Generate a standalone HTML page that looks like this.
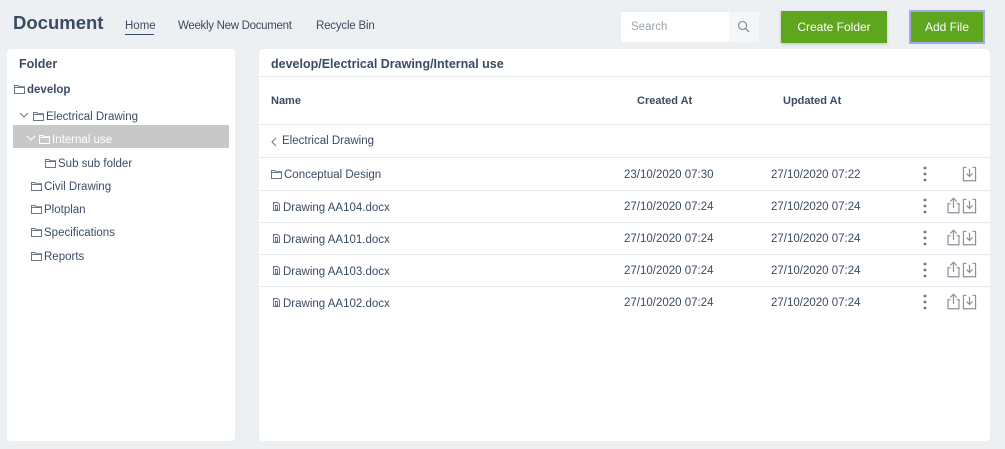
<!DOCTYPE html>
<html><head><meta charset="utf-8"><style>
*{margin:0;padding:0;box-sizing:border-box}
body{width:1005px;height:449px;background:#edf0f2;font-family:"Liberation Sans",sans-serif;color:#3a4b63;position:relative;overflow:hidden;font-size:11.5px}
.a{position:absolute;white-space:nowrap}
.t{margin-top:1px}
.panel{position:absolute;background:#fff;border-radius:4px}
.line{position:absolute;height:1px;background:#e6e9ec}
.f{display:inline-block;vertical-align:-1px;margin-right:2px}
.b{font-weight:bold}
.btn{position:absolute;background:#5ea61e;color:#fff;font-size:12px;text-align:center;line-height:30px}
</style></head><body>
<svg width="0" height="0" style="position:absolute"><defs>
<symbol id="fo" viewBox="0 0 11 10"><path d="M0.5 1.5h3.5l1 1.3h5.5v6.7h-10z M0.5 3.5h10" fill="none" stroke="#6b7686" stroke-width="1"/></symbol>
<symbol id="fi" viewBox="0 0 9 11"><path d="M1.5 1.5h4l2 2v6h-6z M3.5 4.5h2v4h-2z" fill="none" stroke="#6b7686" stroke-width="1"/></symbol>
<symbol id="up" viewBox="0 0 14 14"><path d="M4.5 5.5h-2v7.5h9v-7.5h-2 M7 9V1 M4.3 3.7L7 1L9.7 3.7" fill="none" stroke="#8a929c" stroke-width="1"/></symbol>
<symbol id="dn" viewBox="0 0 14 14"><path d="M4.5 2h-2.5v11h10v-11h-2.5 M7 3v6.5 M4.5 7L7 9.5L9.5 7" fill="none" stroke="#8a929c" stroke-width="1"/></symbol>
</defs></svg>

<div class="a b" style="left:13px;top:12px;font-size:18.5px;color:#3a4b63">Document</div>
<div class="a" style="left:125px;top:20px">Home</div>
<div class="a" style="left:125px;top:34px;width:29px;height:1px;background:#3a4b63"></div>
<div class="a" style="left:178px;top:20px;letter-spacing:-0.3px">Weekly New Document</div>
<div class="a" style="left:316px;top:20px;letter-spacing:-0.2px">Recycle Bin</div>

<div class="a" style="left:621px;top:12px;width:108px;height:30px;background:#fff"></div>
<div class="a" style="left:631px;top:21px;color:#9aa3ae">Search</div>
<div class="a" style="left:729px;top:12px;width:30px;height:30px;background:#f4f6f8"></div>
<svg class="a" style="left:737px;top:20px" width="14" height="14" viewBox="0 0 14 14"><circle cx="5.5" cy="5.5" r="4" fill="none" stroke="#7a8390" stroke-width="1.1"/><path d="M8.5 8.5L12 12" stroke="#7a8390" stroke-width="1.2"/></svg>
<div class="btn" style="left:781px;top:11px;width:106px;height:32px;line-height:32px;box-shadow:0 1px 3px rgba(0,0,0,.2)">Create Folder</div>
<div class="btn" style="left:909px;top:10px;width:76px;height:34px;line-height:30px;border:2px solid #a3a8e6">Add File</div>

<div class="panel" style="left:7px;top:49px;width:228px;height:392px"></div>
<div class="a b" style="left:19px;top:57px;font-size:12.5px">Folder</div>
<div class="a b t" style="left:14px;top:83px"><svg class="f" width="11" height="10"><use href="#fo"/></svg>develop</div>
<svg class="a" style="left:19px;top:112px" width="10" height="7"><path d="M1 1l4 4l4-4" fill="none" stroke="#6b7686"/></svg>
<div class="a t" style="left:33px;top:110px"><svg class="f" width="11" height="10"><use href="#fo"/></svg>Electrical Drawing</div>
<div class="a" style="left:13px;top:125px;width:216px;height:23px;background:#c8c8c8"></div>
<svg class="a" style="left:26px;top:135px" width="10" height="7"><path d="M1 1l4 4l4-4" fill="none" stroke="#fff"/></svg>
<div class="a t" style="left:39px;top:133px;color:#fff"><svg class="f" width="11" height="10"><path d="M0.5 1.5h3.5l1 1.3h5.5v6.7h-10z M0.5 3.5h10" fill="none" stroke="#fff"/></svg>Internal use</div>
<div class="a t" style="left:45px;top:157px"><svg class="f" width="11" height="10"><use href="#fo"/></svg>Sub sub folder</div>
<div class="a t" style="left:31px;top:180px"><svg class="f" width="11" height="10"><use href="#fo"/></svg>Civil Drawing</div>
<div class="a t" style="left:31px;top:203px"><svg class="f" width="11" height="10"><use href="#fo"/></svg>Plotplan</div>
<div class="a t" style="left:31px;top:226px"><svg class="f" width="11" height="10"><use href="#fo"/></svg>Specifications</div>
<div class="a t" style="left:31px;top:250px"><svg class="f" width="11" height="10"><use href="#fo"/></svg>Reports</div>

<div class="panel" style="left:259px;top:49px;width:731px;height:392px"></div>
<div class="a b" style="left:271px;top:57px;font-size:12.5px">develop/Electrical Drawing/Internal use</div>
<div class="line" style="left:259px;top:76px;width:731px"></div>
<div class="a b t" style="left:271px;top:94px;font-size:11px">Name</div>
<div class="a b t" style="left:637px;top:94px;font-size:11px">Created At</div>
<div class="a b t" style="left:783px;top:94px;font-size:11px">Updated At</div>
<div class="line" style="left:259px;top:124px;width:731px"></div>
<svg class="a" style="left:271px;top:137px" width="6" height="10"><path d="M5 1L1 5l4 4" fill="none" stroke="#6b7686"/></svg>
<div class="a t" style="left:282px;top:134px">Electrical Drawing</div>
<div class="line" style="left:259px;top:157px;width:731px"></div>

<div class="a t" style="left:271px;top:168px"><svg class="f" width="11" height="10"><use href="#fo"/></svg>Conceptual Design</div>
<div class="a t" style="left:624px;top:168px">23/10/2020 07:30</div>
<div class="a t" style="left:771px;top:168px">27/10/2020 07:22</div>
<div class="line" style="left:259px;top:190px;width:731px"></div>

<div class="a t" style="left:272px;top:200px"><svg class="f" width="9" height="11"><use href="#fi"/></svg>Drawing AA104.docx</div>
<div class="a t" style="left:624px;top:200px">27/10/2020 07:24</div>
<div class="a t" style="left:771px;top:200px">27/10/2020 07:24</div>
<div class="line" style="left:259px;top:222px;width:731px"></div>

<div class="a t" style="left:272px;top:232px"><svg class="f" width="9" height="11"><use href="#fi"/></svg>Drawing AA101.docx</div>
<div class="a t" style="left:624px;top:232px">27/10/2020 07:24</div>
<div class="a t" style="left:771px;top:232px">27/10/2020 07:24</div>
<div class="line" style="left:259px;top:254px;width:731px"></div>

<div class="a t" style="left:272px;top:264px"><svg class="f" width="9" height="11"><use href="#fi"/></svg>Drawing AA103.docx</div>
<div class="a t" style="left:624px;top:264px">27/10/2020 07:24</div>
<div class="a t" style="left:771px;top:264px">27/10/2020 07:24</div>
<div class="line" style="left:259px;top:286px;width:731px"></div>

<div class="a t" style="left:272px;top:296px"><svg class="f" width="9" height="11"><use href="#fi"/></svg>Drawing AA102.docx</div>
<div class="a t" style="left:624px;top:296px">27/10/2020 07:24</div>
<div class="a t" style="left:771px;top:296px">27/10/2020 07:24</div>

<svg class="a" style="left:920px;top:164px" width="70" height="150">
<g fill="#6b7280">
<circle cx="5" cy="4" r="1.4"/><circle cx="5" cy="10" r="1.4"/><circle cx="5" cy="16" r="1.4"/>
<circle cx="5" cy="36" r="1.4"/><circle cx="5" cy="42" r="1.4"/><circle cx="5" cy="48" r="1.4"/>
<circle cx="5" cy="68" r="1.4"/><circle cx="5" cy="74" r="1.4"/><circle cx="5" cy="80" r="1.4"/>
<circle cx="5" cy="100" r="1.4"/><circle cx="5" cy="106" r="1.4"/><circle cx="5" cy="112" r="1.4"/>
<circle cx="5" cy="132" r="1.4"/><circle cx="5" cy="138" r="1.4"/><circle cx="5" cy="144" r="1.4"/>
</g>
<use href="#dn" x="41" y="1" width="17" height="17"/>
<use href="#up" x="25" y="33" width="17" height="17"/><use href="#dn" x="41" y="33" width="17" height="17"/>
<use href="#up" x="25" y="65" width="17" height="17"/><use href="#dn" x="41" y="65" width="17" height="17"/>
<use href="#up" x="25" y="97" width="17" height="17"/><use href="#dn" x="41" y="97" width="17" height="17"/>
<use href="#up" x="25" y="129" width="17" height="17"/><use href="#dn" x="41" y="129" width="17" height="17"/>
</svg>
</body></html>
